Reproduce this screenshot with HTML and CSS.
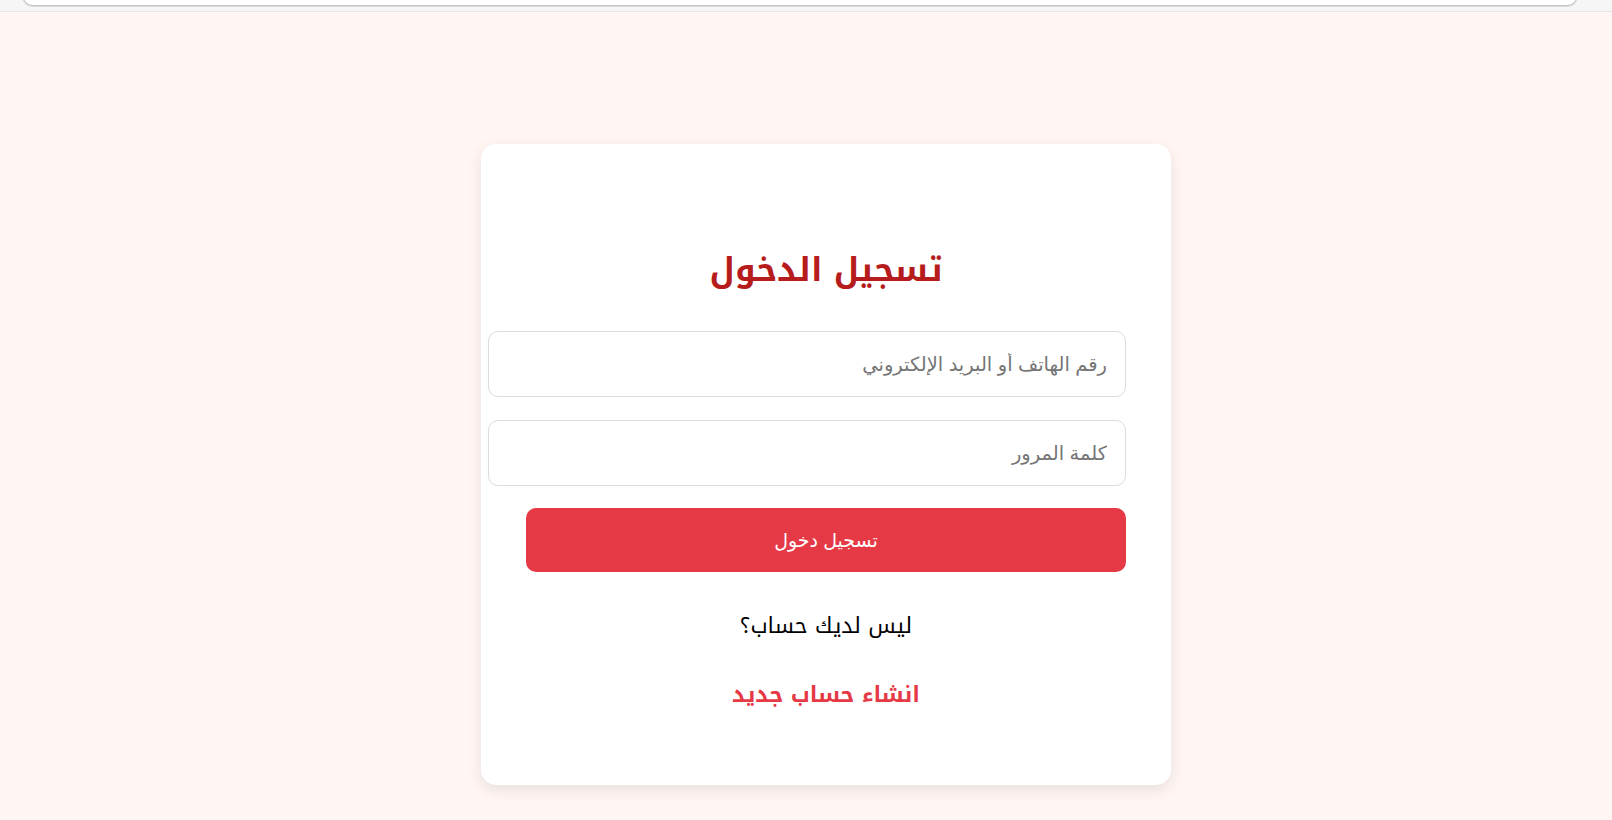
FILE: index.html
```html
<!DOCTYPE html>
<html lang="ar" dir="rtl">
<head>
<meta charset="utf-8">
<title>تسجيل الدخول</title>
<link rel="stylesheet" href="styles.css">
</head>
<body>
<div class="topbar"><div class="addr"></div></div>
<main class="page">
  <section class="card">
    <h2 class="title">تسجيل الدخول</h2>
    <form class="form">
      <input class="field" type="text" placeholder="رقم الهاتف أو البريد الإلكتروني">
      <input class="field field-last" type="password" placeholder="كلمة المرور">
      <button class="btn" type="button">تسجيل دخول</button>
    </form>
    <p class="note">ليس لديك حساب؟</p>
    <p class="link-row"><a class="link" href="#">انشاء حساب جديد</a></p>
  </section>
</main>
</body>
</html>
```
FILE: styles.css
```css
html, body {
  margin: 0;
  padding: 0;
}
body {
  background: #fff5f3;
  font-family: "Noto Kufi Arabic", "Noto Sans Arabic", "DejaVu Sans", sans-serif;
  min-height: 820px;
}
.topbar {
  height: 11px;
  background: #f6f6f6;
  border-bottom: 1px solid #e6e6e6;
  overflow: hidden;
  direction: ltr;
}
.addr {
  height: 20px;
  margin: -16px 34px 0 22px;
  border: 1px solid #c4c4c4;
  border-radius: 20px;
  box-shadow: 0 1px 0 #dcdcdc;
  background: #fff;
}
.page {
  display: flex;
  justify-content: center;
  padding: 132px 0 0 40px;
  direction: ltr;
}
.card {
  direction: rtl;
  width: 600px;
  padding: 45px;
  background: #fff;
  border-radius: 15px;
  box-shadow: 0 5px 15px rgba(0, 0, 0, 0.09);
  text-align: center;
}
.title {
  margin: 51px 0 31px;
  line-height: 60px;
  font-size: 33px;
  font-weight: 700;
  color: #b71c1c;
}
.form {
  display: flex;
  flex-direction: column;
  align-items: flex-start;
}
.field {
  width: 100%;
  height: 64px;
  padding: 0 18px;
  margin: 0 0 23px;
  box-sizing: content-box;
  border: 1px solid #dcdcdc;
  border-radius: 10px;
  font-family: "Liberation Sans", "DejaVu Sans", sans-serif;
  font-size: 19.5px;
  color: #333;
  background: #fff;
  outline: none;
}
.field-last {
  margin-bottom: 22px;
}
.field::placeholder {
  color: #757575;
}
.btn {
  width: 100%;
  height: 64px;
  border: none;
  border-radius: 10px;
  background: #e63946;
  color: #fff;
  font-family: "Liberation Sans", "DejaVu Sans", sans-serif;
  font-size: 19px;
  cursor: pointer;
}
.note {
  margin: 39px 0 0;
  line-height: 30px;
  font-size: 22px;
  color: #000;
}
.link-row {
  margin: 39px 0 28px;
  line-height: 30px;
}
.link {
  font-size: 22px;
  font-weight: 700;
  color: #e63946;
  text-decoration: none;
}
```
